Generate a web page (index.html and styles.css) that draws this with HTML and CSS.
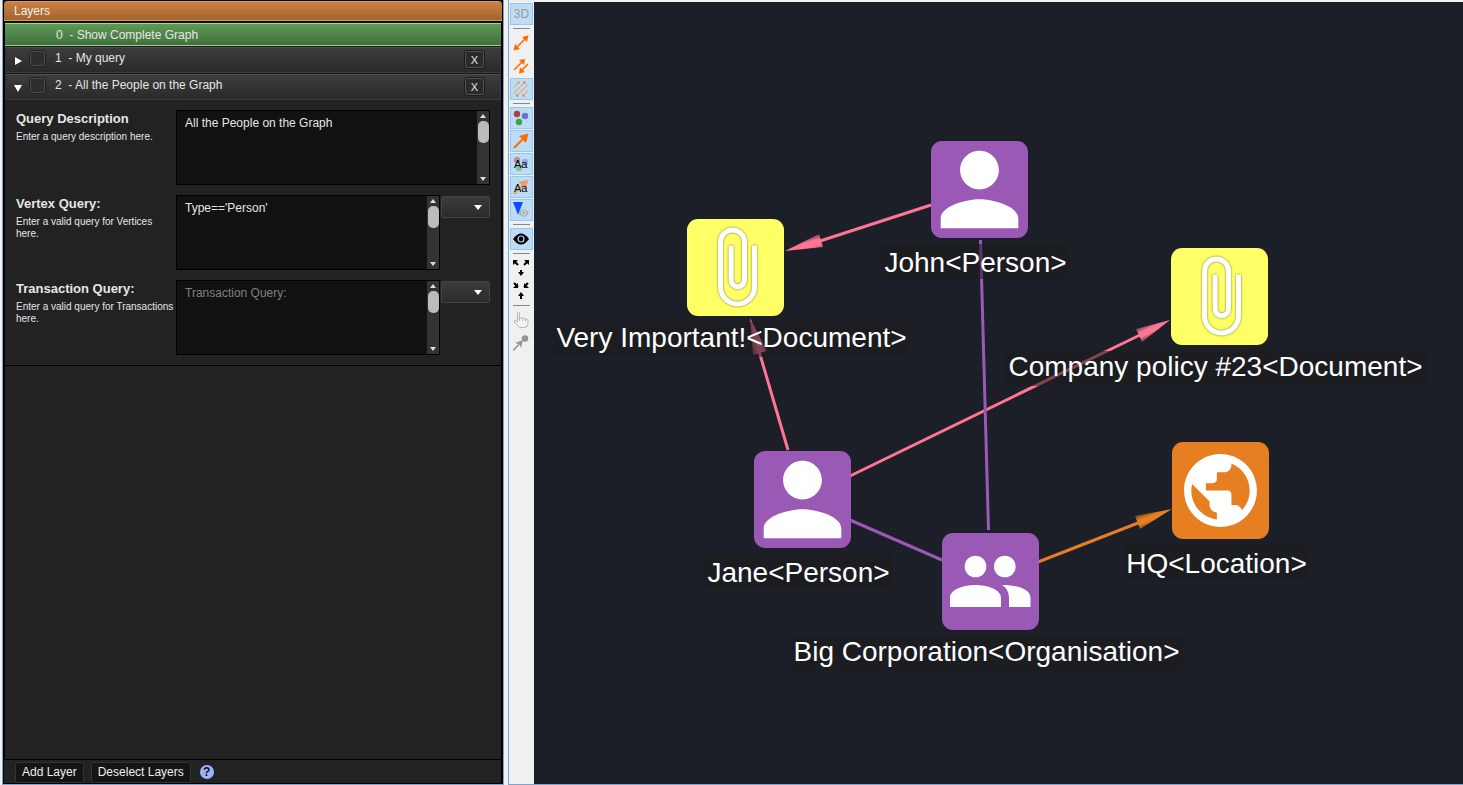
FILE: index.html
```html
<!DOCTYPE html>
<html lang="en">
<head>
<meta charset="utf-8">
<title>Layers</title>
<link rel="stylesheet" href="styles.css">
</head>
<body>
<div class="app">
  <section class="panel">
    <h1 class="panel-title">Layers</h1>
    <div class="panel-main">
      <div class="layer layer-active"><span class="layer-name">0 &nbsp;- Show Complete Graph</span></div>
      <div class="layer">
        <button class="expander" aria-label="Expand layer 1"><svg width="8" height="8"><path d="M1 0L8 4L1 8z" fill="#fff"/></svg></button>
        <input class="check" type="checkbox" aria-label="Enable layer 1">
        <span class="layer-name">1 &nbsp;- My query</span>
        <button class="remove" aria-label="Remove layer 1">X</button>
      </div>
      <div class="layer">
        <button class="expander" aria-label="Collapse layer 2"><svg width="8" height="8"><path d="M0 1H8L4 8z" fill="#fff"/></svg></button>
        <input class="check" type="checkbox" aria-label="Enable layer 2">
        <span class="layer-name">2 &nbsp;- All the People on the Graph</span>
        <button class="remove" aria-label="Remove layer 2">X</button>
      </div>
      <div class="layer-body">
        <div class="field">
          <label class="field-label" for="desc"><b>Query Description</b><small>Enter a query description here.</small></label>
          <div class="box"><textarea id="desc">All the People on the Graph</textarea><div class="scroll"><i class="up"></i><i class="thumb"></i><i class="down"></i></div></div>
        </div>
        <div class="field">
          <label class="field-label" for="vertex"><b>Vertex Query:</b><small>Enter a valid query for Vertices here.</small></label>
          <div class="box"><textarea id="vertex">Type=='Person'</textarea><div class="scroll"><i class="up"></i><i class="thumb"></i><i class="down"></i></div></div>
          <div class="pick"><select aria-label="Recent vertex queries"><option></option></select></div>
        </div>
        <div class="field">
          <label class="field-label" for="trans"><b>Transaction Query:</b><small>Enter a valid query for Transactions here.</small></label>
          <div class="box"><textarea id="trans" placeholder="Transaction Query:"></textarea><div class="scroll"><i class="up"></i><i class="thumb"></i><i class="down"></i></div></div>
          <div class="pick"><select aria-label="Recent transaction queries"><option></option></select></div>
        </div>
      </div>
    </div>
    <footer class="panel-footer">
      <button class="action">Add Layer</button>
      <button class="action">Deselect Layers</button>
      <button class="help" aria-label="Help">?</button>
    </footer>
  </section>

  <nav class="toolbar" aria-label="Graph tools">
    <button class="tool on muted">3D</button>
    <hr>
    <button class="tool" aria-label="Draw directed"><svg width="16" height="16" viewBox="0 0 16 16"><path d="M3 13L13 3" stroke="#ff6a00" stroke-width="1.6"/><path d="M15.500 .5L14 7L9 2z M.5 15.500L2 9L7 14z" fill="#ff6a00"/></svg></button>
    <button class="tool" aria-label="Two arrows"><svg width="16" height="16" viewBox="0 0 16 16"><path d="M1 12L9 4M15 6L9 12" stroke="#ff6a00" stroke-width="1.6"/><path d="M12 1L11 7L6 2z M6 15.500L7 9.500L12 14z" fill="#ff6a00"/></svg></button>
    <button class="tool on" aria-label="All arrows"><svg width="16" height="16" viewBox="0 0 16 16"><path d="M.5 6.500L6 1M.5 12.500L12 1M3.500 15L15 3.500M10.500 14L15 9.500" stroke="#ff8a3c"/><path d="M6.500 .5V3L4 .5z M12.500 .5V3.500L9.500 .5z M3 15.500V12.500L6 15.500z M9.500 15.500V12.500L12.500 15.500z" fill="#ff7a20"/></svg></button>
    <hr>
    <button class="tool on" aria-label="Show nodes"><svg width="16" height="16" viewBox="0 0 16 16"><circle cx="4" cy="4" r="3.200" fill="#b04045"/><circle cx="12" cy="6" r="3.200" fill="#6870dc"/><circle cx="6" cy="12" r="3.200" fill="#3ea545"/></svg></button>
    <button class="tool on" aria-label="Show connections"><svg width="16" height="16" viewBox="0 0 16 16"><path d="M1 15L11 5" stroke="#ff6a00" stroke-width="2"/><path d="M15.500 .5L13 10L6 3z" fill="#ff6a00"/></svg></button>
    <button class="tool on" aria-label="Show node labels"><svg width="16" height="16" viewBox="0 0 16 16"><circle cx="4" cy="4" r="3.200" fill="#c08f9f"/><circle cx="12" cy="6" r="3.200" fill="#9ba9e8"/><circle cx="6" cy="12" r="3.200" fill="#7fc49a"/><text class="aa" x="1" y="12">Aa</text></svg></button>
    <button class="tool on" aria-label="Show connection labels"><svg width="16" height="16" viewBox="0 0 16 16"><path d="M1 15L11 5" stroke="#e8a070" stroke-width="2"/><path d="M15.500 .5L13 10L5 3z" fill="#e8a070"/><text class="aa" x="1" y="13">Aa</text></svg></button>
    <button class="tool on" aria-label="Show blazes"><svg width="16" height="16" viewBox="0 0 16 16"><path d="M0 0H10L5 13z" fill="#0a50ff"/><path d="M5.500 11Q10.500 3.500 16 11Q10.500 18.500 5.500 11z" fill="#a9adb1"/><circle cx="10.800" cy="11" r="2.200" fill="#a9adb1" stroke="#dce8ee"/></svg></button>
    <hr>
    <button class="tool on" aria-label="Visibility"><svg width="16" height="16" viewBox="0 0 16 16"><path d="M0 8Q8-3 16 8Q8 19 0 8z" fill="#000"/><circle cx="8" cy="8" r="3" fill="#000" stroke="#bedcf3" stroke-width="1.200"/></svg></button>
    <hr>
    <button class="tool" aria-label="Expand"><svg width="16" height="18" viewBox="0 0 16 18"><path d="M1 2L5 6M15 2L11 6M8 11V15" stroke="#000" stroke-width="2"/><path d="M0 1H5L0 6z M16 1H11L16 6z M5 13H11L8 17z"/></svg></button>
    <button class="tool" aria-label="Contract"><svg width="16" height="18" viewBox="0 0 16 18"><path d="M1 1L5 5M15 1L11 5M8 12V17" stroke="#000" stroke-width="2"/><path d="M5 1V6H0z M11 1V6H16z M5 14H11L8 10z"/></svg></button>
    <hr>
    <button class="tool" aria-label="Select"><svg width="16" height="16" viewBox="0 0 16 16"><path d="M4.500 10V2Q4.500 .5 5.500 .5T6.500 2V6Q8.500 5 9.500 6.500Q11.500 5.800 12.500 7.200Q15 6.800 15 9V11.500Q15 15.500 11 15.500H8Q6 15.500 4.500 13.500L1 10Q.5 8.500 2 8.500zM6.500 6V9M9.500 6.500V9M12.500 7.200V9.500" fill="#f4f4f4" stroke="#b5b5b5"/></svg></button>
    <button class="tool" aria-label="Create connection"><svg width="16" height="16" viewBox="0 0 16 16"><circle cx="12" cy="3.500" r="3.300" fill="#969696"/><path d="M0 15.500L6 9.500" stroke="#969696" stroke-width="1.600"/><path d="M10 5L8 13L6.500 9.500L2 8z" fill="#969696"/></svg></button>
  </nav>

  <main class="graph">
    <svg class="edges" aria-hidden="true">
      <defs>
        <linearGradient id="g1" gradientUnits="userSpaceOnUse" x1="819" y1="234" x2="823" y2="248"><stop stop-color="#6f3f4f"/><stop offset=".35" stop-color="#ff7593"/><stop offset=".7" stop-color="#ff7593"/><stop offset="1" stop-color="#a5536a"/></linearGradient>
        <linearGradient id="g2" gradientUnits="userSpaceOnUse" x1="1136" y1="329" x2="1142" y2="342"><stop stop-color="#6f3f4f"/><stop offset=".35" stop-color="#ff7593"/><stop offset=".65" stop-color="#ff7593"/><stop offset="1" stop-color="#6f3f4f"/></linearGradient>
        <linearGradient id="g3" gradientUnits="userSpaceOnUse" x1="753" y1="354" x2="767" y2="351"><stop stop-color="#8a4a5c"/><stop offset=".4" stop-color="#ff7593"/><stop offset=".7" stop-color="#ff7593"/><stop offset="1" stop-color="#8a4a5c"/></linearGradient>
        <linearGradient id="g4" gradientUnits="userSpaceOnUse" x1="1135" y1="516" x2="1140" y2="530"><stop stop-color="#6b4526"/><stop offset=".35" stop-color="#e67e22"/><stop offset=".65" stop-color="#e67e22"/><stop offset="1" stop-color="#6b4526"/></linearGradient>
      </defs>
      <g transform="translate(-534 -2)" stroke-width="3" fill="none">
        <path d="M931 205L820 241M788 450L759 351M850 476L1140 335" stroke="#ff7593"/>
        <path d="M980.500 240L988.500 530M850 520L942 560" stroke="#9b59b6"/>
        <path d="M1038 562L1138 523" stroke="#e67e22"/>
        <g stroke="none">
          <path d="M785 251L819 234L823 247z" fill="url(#g1)"/>
          <path d="M1170 320L1136 329L1142 342z" fill="url(#g2)"/>
          <path d="M750 318L753 355L767 351z" fill="url(#g3)"/>
          <path d="M1172 509L1135 516L1140 529z" fill="url(#g4)"/>
        </g>
      </g>
    </svg>

    <div class="node john"><svg class="tile purple" viewBox="2 2 20 20"><path d="M12 12c2.210 0 4-1.790 4-4s-1.790-4-4-4-4 1.790-4 4 1.790 4 4 4zm0 2c-2.670 0-8 1.340-8 4v2h16v-2c0-2.660-5.330-4-8-4z"/></svg><span class="tag">John&lt;Person&gt;</span></div>
    <div class="node important"><svg class="tile yellow" viewBox="0 0 97 97"><path class="clip" d="M67.500 26.500V68a17 17 0 0 1-34 0V23a12 12 0 0 1 24 0V61a6.700 6.700 0 0 1-13.400 0V26.500"/></svg><span class="tag descends">Very Important!&lt;Document&gt;</span></div>
    <div class="node policy"><svg class="tile yellow" viewBox="0 0 97 97"><path class="clip" d="M67.500 26.500V68a17 17 0 0 1-34 0V23a12 12 0 0 1 24 0V61a6.700 6.700 0 0 1-13.400 0V26.500"/></svg><span class="tag descends">Company policy #23&lt;Document&gt;</span></div>
    <div class="node jane"><svg class="tile purple" viewBox="2 2 20 20"><path d="M12 12c2.210 0 4-1.790 4-4s-1.790-4-4-4-4 1.790-4 4 1.790 4 4 4zm0 2c-2.670 0-8 1.340-8 4v2h16v-2c0-2.660-5.330-4-8-4z"/></svg><span class="tag">Jane&lt;Person&gt;</span></div>
    <div class="node corp"><svg class="tile purple" viewBox="0 0 97 97"><circle cx="33.500" cy="33.500" r="10.800"/><circle cx="62.800" cy="33.500" r="10.800"/><path d="M8 74V65C8 56 22 52 33.500 52S59 56 59 65V74zM60 52C65 55 67 60 67 65V74H88.500V65C88.500 56 75 52 60 52z"/></svg><span class="tag descends">Big Corporation&lt;Organisation&gt;</span></div>
    <div class="node hq"><svg class="tile orange" viewBox="-1.300 -1.300 26.600 26.600"><path d="M12 2C6.480 2 2 6.480 2 12s4.480 10 10 10 10-4.480 10-10S17.520 2 12 2zm-1 17.930c-3.950-.49-7-3.850-7-7.930 0-.62.08-1.210.21-1.790L9 15v1c0 1.100.9 2 2 2v1.930zm6.900-2.540c-.26-.81-1-1.390-1.900-1.390h-1v-3c0-.55-.45-1-1-1H8v-2h2c.55 0 1-.45 1-1V7h2c1.100 0 2-.9 2-2v-.41c2.930 1.190 5 4.060 5 7.410 0 2.080-.8 3.970-2.100 5.390z"/></svg><span class="tag">HQ&lt;Location&gt;</span></div>
  </main>
</div>
</body>
</html>
```
FILE: styles.css
```css
* { box-sizing: border-box; }
body {
  margin: 0;
  background: #f0f0f0;
  font: 12px/14px "Liberation Sans", Arial, sans-serif;
  color: #e6e6e6;
}
button, textarea, select { font: inherit; color: inherit; padding: 0; margin: 0; }
.app { display: flex; height: 100vh; padding-left: 2px; }

.panel {
  flex: 0 0 502px;
  display: flex;
  flex-direction: column;
  background: #222;
  border: solid #7aa5d0;
  border-width: 0 1px 1px;
  margin-right: 4px;
  box-shadow: inset 1px 1px #000, inset -2px -1px #000;
}
.panel-title {
  margin: 1px 1px 0;
  height: 20px;
  padding-left: 10px;
  font-size: 12px;
  font-weight: normal;
  line-height: 18px;
  color: #eee;
  background: linear-gradient(#cc8040, #a3642f);
  border: solid #d99a63;
  border-width: 1px 0;
  border-radius: 4px 4px 0 0;
}
.panel-main {
  flex: 1;
  margin: 0 1px;
  border: solid #000;
  border-width: 2px 1px 1px;
}
.layer {
  display: flex;
  align-items: center;
  height: 26px;
  margin-bottom: 1px;
  padding: 0 16px 0 8px;
  background: linear-gradient(#3c3c3c, #2a2a2a);
  border: 1px solid;
  border-color: #505050 #3c3c3c #3c3c3c #303030;
  box-shadow: 0 -1px #181818;
}
.layer-active {
  height: 23px;
  padding-left: 51px;
  background: linear-gradient(#5f9a58, #416f3d);
  border-width: 1px 0;
  border-color: #a3cf9d #7eb078;
}
.layer-name { flex: 1; padding-bottom: 4px; }
.layer-active .layer-name { padding: 0; }
.expander { width: 8px; height: 8px; background: none; border: 0; margin: 2px 8px 0 0; }
.expander svg { display: block; }
.check {
  appearance: none;
  width: 15px;
  height: 15px;
  margin: 0 10px 3px 0;
  background: #2e2e2e;
  border: 1px solid #4a4a4a;
  border-radius: 2px;
  outline: 1px solid #222;
}
.remove {
  width: 19px;
  height: 17px;
  margin-bottom: 1px;
  font-size: 11px;
  line-height: 14px;
  background: #2a2a2a;
  border: 1px solid #505050;
  border-radius: 2px;
  outline: 1px solid #1c1c1c;
}
.layer-body {
  display: flex;
  flex-direction: column;
  gap: 10px;
  padding: 9px 11px 10px;
  border-bottom: 1px solid #000;
  background: #222;
}
.field { display: flex; align-items: flex-start; }
.field-label { flex: 0 0 160px; padding-top: 1px; }
.field-label b { display: block; font-size: 13px; line-height: 15px; }
.field-label small { display: block; margin-top: 5px; font-size: 10px; line-height: 12px; }
.box {
  flex: 1;
  display: flex;
  height: 75px;
  background: #111;
  border: 1px solid #000;
}
.box textarea {
  flex: 1;
  min-width: 0;
  padding: 5px 8px;
  background: none;
  border: 0;
  resize: none;
  overflow: hidden;
  outline: 0;
}
.box textarea::placeholder { color: #808080; }
.scroll {
  flex: 0 0 12px;
  display: flex;
  flex-direction: column;
  align-items: center;
  background: #333;
}
.scroll .up, .scroll .down { border: 3px solid transparent; }
.scroll .up { border-top: 0; border-bottom: 4px solid #ddd; margin: 3px 0; }
.scroll .down { border-bottom: 0; border-top: 4px solid #ddd; margin: auto 0 3px; }
.scroll .thumb { width: 11px; height: 22px; border-radius: 5px; background: #bbb; }
.pick { flex: 0 0 49px; margin-left: 1px; position: relative; }
.pick::after {
  content: "";
  position: absolute;
  right: 8px;
  top: 10px;
  border: 4px solid transparent;
  border-bottom: 0;
  border-top: 5px solid #fff;
  pointer-events: none;
}
.pick select {
  display: block;
  appearance: none;
  width: 100%;
  height: 22px;
  margin-top: 1px;
  background: linear-gradient(#3b3b3b, #2b2b2b);
  border: 1px solid #444;
  border-radius: 2px;
}
.panel-footer {
  display: flex;
  align-items: center;
  gap: 7px;
  height: 24px;
  padding: 0 12px;
}
.action {
  height: 21px;
  padding: 0 6px;
  background: #151515;
  border: 1px solid #333;
  border-radius: 2px;
  color: #eee;
}
.help {
  width: 14px;
  height: 14px;
  border: 0;
  border-radius: 50%;
  background: #9db2ff;
  color: #111;
  font-size: 12px;
  font-weight: bold;
  line-height: 14px;
  margin-left: 2px;
}

.toolbar {
  flex: 0 0 26px;
  padding: 3px 1px 0;
  border: solid #7aa5d0;
  border-width: 0 0 1px 1px;
}
.toolbar hr { height: 1px; margin: 3px 3px; border: 0; background: #888; }
.tool {
  display: flex;
  align-items: center;
  justify-content: center;
  width: 23px;
  height: 22px;
  margin-bottom: 1px;
  background: none;
  border: 1px solid transparent;
  color: #999;
}
.tool.on { background: #bedcf3; border-color: #90c8f6; }
.tool svg { flex: none; margin-right: 1px; }
.aa { font: 11px "Liberation Sans", Arial, sans-serif; fill: #000; }

.graph {
  flex: 1;
  position: relative;
  overflow: hidden;
  margin-top: 2px;
  background: #1c1f27;
  border-bottom: 1px solid #7aa5d0;
}
.edges { position: absolute; width: 100%; height: 100%; }
.node {
  position: absolute;
  display: flex;
  flex-direction: column;
  align-items: center;
  width: 97px;
}
.tile { flex: none; width: 97px; height: 97px; border-radius: 11px; fill: #fff; }
.purple { background: #9b59b6; }
.yellow { background: #ffff66; }
.orange { background: #e67e22; }
.clip { fill: none; stroke: #fff; stroke-width: 5; filter: drop-shadow(0 0 1px #777744); }
.tag {
  margin: 6px 8px 0 0;
  padding: 2px 3px 0;
  font-size: 28px;
  line-height: 33px;
  color: #fff;
  white-space: nowrap;
  background: rgba(27, 27, 30, .55);
}
.tag.descends { padding: 0 3px 4px; line-height: 31px; }
.john { left: 397px; top: 139px; }
.important { left: 153px; top: 217px; }
.policy { left: 637px; top: 246px; }
.jane { left: 220px; top: 449px; }
.corp { left: 408px; top: 531px; }
.hq { left: 638px; top: 440px; }
```
